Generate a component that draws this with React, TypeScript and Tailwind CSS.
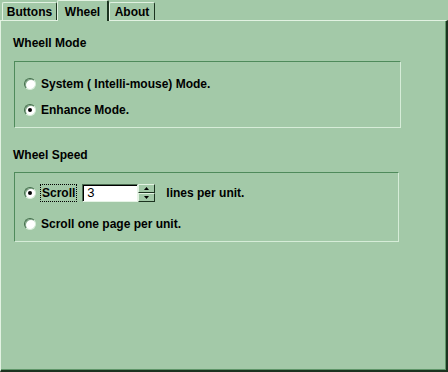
import React from 'react'

const font = { fontFamily: '"Liberation Sans", Arial, sans-serif' }

function Radio({ checked }: { checked?: boolean }) {
  return (
    <div className="w-[12px] h-[12px] rounded-full bg-white border border-t-[#3f6b47] border-l-[#3f6b47] border-r-[#d6ecd8] border-b-[#d6ecd8] shadow-[inset_1px_1px_0_#7fa586] flex items-center justify-center shrink-0">
      {checked && <div className="w-[4px] h-[4px] rounded-full bg-black" />}
    </div>
  )
}

function Tab({ label, selected, w }: { label: string; selected?: boolean; w: string }) {
  if (selected) {
    return (
      <div className={`${w} h-[21px] -mb-px relative z-10 bg-[#a3c9a8] border-l border-t border-[#e2f2e2] rounded-tl-[2px] rounded-tr-[2px] border-r-2 border-r-[#1c3320] flex justify-center pt-[2px] text-[12px] font-bold text-black`}>
        {label}
      </div>
    )
  }
  return (
    <div className={`${w} h-[18px] bg-[#a3c9a8] border-l border-t border-[#e2f2e2] rounded-tl-[2px] rounded-tr-[2px] border-r border-r-[#1c3320] flex items-center justify-center text-[12px] font-bold text-black`}>
      {label}
    </div>
  )
}

export default function App() {
  return (
    <div className="w-[448px] h-[372px] bg-[#a3c9a8] flex flex-col select-none" style={font}>
      {/* tabs */}
      <div className="h-[20px] flex items-end pl-[2px]">
        <Tab label="Buttons" w="w-[55px]" />
        <Tab label="Wheel" w="w-[52px]" selected />
        <Tab label="About" w="w-[46px]" />
      </div>

      {/* page */}
      <div className="flex-1 border-t border-l border-[#e2f2e2] border-r-2 border-b-2 border-r-[#1c3320] border-b-[#1c3320] shadow-[inset_-1px_-1px_0_#5e9668] pl-[13px] pt-[14px]">
        <div className="h-[16px] leading-[16px] text-[12px] font-bold text-black -ml-[1px]">Wheell Mode</div>

        <div className="mt-[10px] w-[387px] h-[67px] border border-t-[#4f8a5b] border-l-[#4f8a5b] border-r-[#d6ecd8] border-b-[#d6ecd8] pl-[9px] pt-[16px] flex flex-col gap-[14px]">
          <div className="flex items-center h-[12px]">
            <Radio />
            <span className="ml-[5px] text-[12px] font-bold text-black leading-[12px]">System ( Intelli-mouse) Mode.</span>
          </div>
          <div className="flex items-center h-[12px]">
            <Radio checked />
            <span className="ml-[5px] text-[12px] font-bold text-black leading-[12px]">Enhance Mode.</span>
          </div>
        </div>

        <div className="mt-[19px] h-[16px] leading-[16px] text-[12px] font-bold text-black -ml-[1px]">Wheel Speed</div>

        <div className="mt-[9px] w-[385px] h-[70px] border border-t-[#4f8a5b] border-l-[#4f8a5b] border-r-[#d6ecd8] border-b-[#d6ecd8] pl-[9px] pt-[11px]">
          <div className="flex items-center h-[18px]">
            <Radio checked />
            <span className="ml-[4px] h-[18px] px-[1px] flex items-center border border-dotted border-black text-[12px] font-bold text-black">Scroll</span>
            <div className="ml-[5px] w-[56px] h-[18px] bg-white border border-t-[#4a6b50] border-l-[#4a6b50] border-r-[#e6f4e6] border-b-[#e6f4e6] shadow-[inset_1px_1px_0_#000] pl-[4px] flex items-center text-[13px] text-black">
              3
            </div>
            <div className="w-[17px] h-[18px] flex flex-col">
              <div className="h-[9px] bg-[#a3c9a8] border border-t-[#e2f2e2] border-l-[#e2f2e2] border-r-[#1c3320] border-b-[#1c3320] flex items-center justify-center">
                <svg width="5" height="3" viewBox="0 0 5 3"><path d="M2.5 0 L5 3 L0 3 Z" fill="#000" /></svg>
              </div>
              <div className="h-[9px] bg-[#a3c9a8] border border-t-[#e2f2e2] border-l-[#e2f2e2] border-r-[#1c3320] border-b-[#1c3320] flex items-center justify-center">
                <svg width="5" height="3" viewBox="0 0 5 3"><path d="M0 0 L5 0 L2.5 3 Z" fill="#000" /></svg>
              </div>
            </div>
            <span className="ml-[11px] text-[12px] font-bold text-black">lines per unit.</span>
          </div>
          <div className="flex items-center h-[12px] mt-[16px]">
            <Radio />
            <span className="ml-[5px] text-[12px] font-bold text-black leading-[12px]">Scroll one page per unit.</span>
          </div>
        </div>
      </div>
    </div>
  )
}
